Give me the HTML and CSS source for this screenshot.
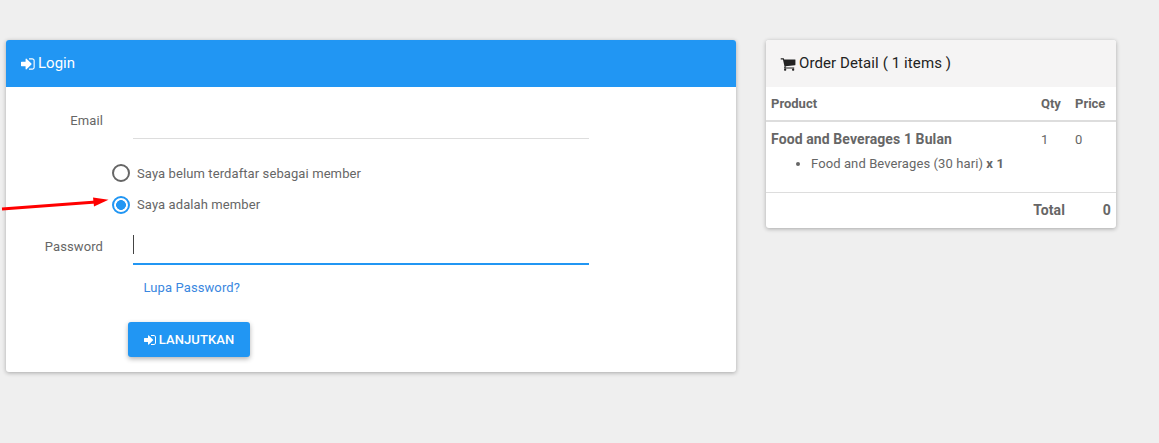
FILE: index.html
```html
<!DOCTYPE html>
<html lang="id">
<head>
<meta charset="utf-8">
<title>Login</title>
<link rel="stylesheet" href="styles.css">
</head>
<body>
<svg class="red-arrow" width="112" height="18" viewBox="0 0 112 18"><path d="M2 15 L96 8" stroke="#f00" stroke-width="3" fill="none"/><path d="M93 3.4 L108.5 5.8 L94 12.4 Z" fill="#f00"/></svg>
<main class="page">
  <section class="card login">
    <header class="login-head">
      <svg class="ico" viewBox="0 0 1792 1792"><path fill="currentColor" d="M1184 896q0 26-19 45l-544 544q-19 19-45 19t-45-19-19-45v-288h-448q-26 0-45-19t-19-45v-384q0-26 19-45t45-19h448v-288q0-26 19-45t45-19 45 19l544 544q19 19 19 45zm352-352v704q0 119-84.5 203.5t-203.5 84.5h-320q-13 0-22.5-9.5t-9.5-22.5q0-4-1-20t-.5-26.5 3-23.5 10-19.5 20.5-6.5h320q66 0 113-47t47-113v-704q0-66-47-113t-113-47h-312l-11.5-1-11.5-3-8-5.5-7-9-2-13.5q0-4-1-20t-.5-26.5 3-23.5 10-19.5 20.5-6.5h320q119 0 203.5 84.5t84.5 203.5z"/></svg>
      <span>Login</span>
    </header>
    <div class="login-body">
      <div class="field email-field">
        <label class="field-label">Email</label>
        <div class="field-line"></div>
      </div>
      <div class="radios">
        <div class="radio-row"><span class="radio"></span><span>Saya belum terdaftar sebagai member</span></div>
        <div class="radio-row"><span class="radio on"></span><span>Saya adalah member</span></div>
      </div>
      <div class="field pass-field">
        <label class="field-label">Password</label>
        <div class="field-line active"><span class="caret"></span></div>
      </div>
      <a class="forgot">Lupa Password?</a>
      <button class="submit">
        <svg class="ico small" viewBox="0 0 1792 1792"><path fill="currentColor" d="M1184 896q0 26-19 45l-544 544q-19 19-45 19t-45-19-19-45v-288h-448q-26 0-45-19t-19-45v-384q0-26 19-45t45-19h448v-288q0-26 19-45t45-19 45 19l544 544q19 19 19 45zm352-352v704q0 119-84.5 203.5t-203.5 84.5h-320q-13 0-22.5-9.5t-9.5-22.5q0-4-1-20t-.5-26.5 3-23.5 10-19.5 20.5-6.5h320q66 0 113-47t47-113v-704q0-66-47-113t-113-47h-312l-11.5-1-11.5-3-8-5.5-7-9-2-13.5q0-4-1-20t-.5-26.5 3-23.5 10-19.5 20.5-6.5h320q119 0 203.5 84.5t84.5 203.5z"/></svg>
        <span>LANJUTKAN</span>
      </button>
    </div>
  </section>
  <aside class="card order">
    <header class="order-head">
      <svg class="ico cart" viewBox="0 0 1792 1792"><path fill="currentColor" d="M704 1536q0 52-38 90t-90 38-90-38-38-90 38-90 90-38 90 38 38 90zm896 0q0 52-38 90t-90 38-90-38-38-90 38-90 90-38 90 38 38 90zm128-1088v512q0 24-16.5 42.5t-40.5 21.5l-1044 122q13 60 13 70 0 16-24 64h920q26 0 45 19t19 45-19 45-45 19h-1024q-26 0-45-19t-19-45q0-11 8-31.5t16-36 21.5-40 15.5-29.5l-177-823h-204q-26 0-45-19t-19-45 19-45 45-19h256q16 0 28.5 6.5t19.5 15.5 13 24.5 8 26 5.5 29.5 4.5 26h1201q26 0 45 19t19 45z"/></svg>
      <span>Order Detail ( 1 items )</span>
    </header>
    <div class="order-cols">
      <b class="col-product">Product</b><b class="col-qty">Qty</b><b class="col-price">Price</b>
    </div>
    <div class="order-item">
      <div class="item-main">
        <b class="item-name">Food and Beverages 1 Bulan</b>
        <ul class="item-list"><li>Food and Beverages (30 hari) <b>x 1</b></li></ul>
      </div>
      <span class="col-qty item-num">1</span><span class="col-price item-num">0</span>
    </div>
    <div class="order-total"><b>Total</b><b class="total-val">0</b></div>
  </aside>
</main>
</body>
</html>
```
FILE: styles.css
```css
* { box-sizing: border-box; }
html, body { margin: 0; height: 100%; }
body {
  background: #efefef;
  font-family: Roboto, "Liberation Sans", sans-serif;
  font-size: 13px;
  letter-spacing: .1px;
  color: #666;
  overflow: hidden;
}
.page {
  display: flex;
  align-items: flex-start;
  gap: 30px;
  padding: 40px 0 0 6px;
}
.card {
  background: #fff;
  border-radius: 3px;
  box-shadow: 0 1px 4px rgba(0,0,0,.3);
  overflow: hidden;
}
.login { width: 730px; height: 332px; }
.order { width: 350px; height: 188px; }
.ico { width: 16px; height: 16px; flex: none; display: block; }
.login-head {
  height: 47px;
  background: #2196f3;
  color: #fff;
  display: flex;
  align-items: center;
  gap: 1px;
  padding-left: 15px;
  font-size: 15px;
  letter-spacing: 0;
}
.login-head span { position: relative; top: -1px; }
.login-body { padding-top: 14px; }
.field { display: flex; align-items: flex-end; }
.field-label { width: 97px; text-align: right; margin-right: 30px; }
.field-line { width: 456px; border-bottom: 1px solid #ddd; }
.email-field { height: 38px; }
.email-field .field-label { padding-bottom: 11px; }
.email-field .field-line { height: 38px; }
.radios { padding: 25px 0 0 106px; display: flex; flex-direction: column; gap: 13px; }
.radio-row { display: flex; align-items: center; gap: 7px; height: 18px; }
.radio-row + .radio-row .radio { position: relative; top: 1px; }
.radio {
  width: 18px; height: 18px;
  border-radius: 50%;
  border: 2px solid #666;
  display: block;
  flex: none;
}
.radio.on {
  border-color: #2196f3;
  background: radial-gradient(circle, #2196f3 0 4.6px, #fff 5.2px);
}
.pass-field { margin-top: 17px; height: 35px; }
.pass-field .field-label { padding-bottom: 11px; }
.field-line.active { height: 35px; border-bottom: 2px solid #2196f3; padding-top: 5px; }
.caret { display: block; width: 1px; height: 19px; background: #444; }
.forgot {
  display: block;
  color: #3a87e0;
  margin: 14px 0 0 137.5px;
  line-height: 17px;
}
.submit {
  display: flex;
  align-items: center;
  gap: 1px;
  margin: 26px 0 0 122px;
  width: 122px;
  height: 35px;
  justify-content: center;
  background: #2196f3;
  color: #fff;
  border: 0;
  border-radius: 3px;
  font: 500 13px Roboto, "Liberation Sans", sans-serif;
  letter-spacing: .1px;
  box-shadow: 0 2px 5px rgba(0,0,0,.3);
}
.ico.small { width: 14px; height: 14px; }
.order-head {
  height: 47px;
  background: #f5f4f4;
  color: #222;
  display: flex;
  align-items: center;
  gap: 3px;
  padding-left: 14px;
  font-size: 15px;
}
.order-head span { position: relative; top: -1px; }
.ico.cart { width: 16px; height: 16px; }
.order-cols {
  height: 35px;
  display: flex;
  align-items: center;
  padding-left: 5px;
  border-bottom: 2px solid #ddd;
  font-size: 13px;
  letter-spacing: 0;
}
.col-product { width: 270px; }
.col-qty { width: 34px; }
.col-price { width: 36px; }
.order-item {
  height: 71px;
  display: flex;
  padding-left: 5px;
  border-bottom: 1px solid #ddd;
}
.item-main { width: 270px; padding-top: 9px; }
.item-name { font-size: 14px; line-height: 17px; display: block; }
.item-list { margin: 7px 0 0; padding-left: 40px; line-height: 17px; font-size: 13px; white-space: nowrap; }
.item-num { padding-top: 9px; line-height: 17px; }
.order-total {
  display: flex;
  justify-content: flex-end;
  align-items: center;
  height: 34px;
  font-size: 14px;
  padding-right: 5px;
}
.total-val { width: 46px; text-align: right; }
.red-arrow { position: absolute; left: 0; top: 194px; z-index: 2; }
```
